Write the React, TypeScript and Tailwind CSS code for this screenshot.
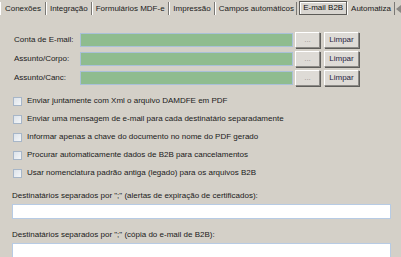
import React from "react";

// Abas do formulário
const abas = [
  { nome: "Conexões", w: "w-[46px]" },
  { nome: "Integração", w: "w-[46px]" },
  { nome: "Formulários MDF-e", w: "w-[77px]" },
  { nome: "Impressão", w: "w-[47px]" },
  { nome: "Campos automáticos", w: "w-[82px]" },
];

const campos = ["Conta de E-mail:", "Assunto/Corpo:", "Assunto/Canc:"];

const opcoes = [
  "Enviar juntamente com Xml o arquivo DAMDFE em PDF",
  "Enviar uma mensagem de e-mail para cada destinatário separadamente",
  "Informar apenas a chave do documento no nome do PDF gerado",
  "Procurar automaticamente dados de B2B para cancelamentos",
  "Usar nomenclatura padrão antiga (legado) para os arquivos B2B",
];

function Botao({ children, w, cor }: { children: React.ReactNode; w: string; cor: string }) {
  return (
    <div
      className={`${w} h-[16px] flex items-center justify-center border border-t-white border-l-white border-b-[#8c8a86] border-r-[#8c8a86] bg-[#dedbd6] shadow-[1px_1px_0_#5f5e5b] ${cor}`}
    >
      {children}
    </div>
  );
}

export default function App() {
  return (
    <div
      className="w-[401px] h-[257px] overflow-hidden bg-[#d4d0c8] text-[8px] leading-none text-black"
      style={{ fontFamily: '"Liberation Sans", Arial, sans-serif' }}
    >
      {/* barra de abas */}
      <div className="h-[18px] flex items-start pt-[2px]">
        {abas.map((a) => (
          <div
            key={a.nome}
            className={`${a.w} h-[13px] flex items-center justify-center border-l border-l-white border-r border-r-[#7a7874] text-[#1a1a1a]`}
          >
            {a.nome}
          </div>
        ))}
        <div className="w-[2px]" />
        <div className="w-[48px] h-[14px] -mt-[1px] flex items-center justify-center border border-[#5c5b58] bg-[#d8d5d0] shadow-[inset_1px_1px_0_white] text-[#111]">
          E-mail B2B
        </div>
        <div className="w-[48px] h-[13px] flex items-center justify-center border-l border-l-white border-r border-r-[#7a7874] text-[#1a1a1a]">
          Automatiza
        </div>
        <div className="ml-[1px] mt-[3px] w-0 h-0 border-y-[4px] border-y-transparent border-r-[5px] border-r-[#8a8884]" />
      </div>

      {/* campos de e-mail */}
      <div className="mt-[14px] flex flex-col gap-[3px] pl-[14px]">
        {campos.map((c) => (
          <div key={c} className="flex items-center h-[16px]">
            <div className="w-[66px] text-[#1a1a1a]">{c}</div>
            <div className="w-[213px] h-[14px] bg-[#8fbc8f] border border-[#a9c0d8]" />
            <div className="ml-[2px]">
              <Botao w="w-[25px]" cor="text-[#9a9894]">
                ...
              </Botao>
            </div>
            <div className="ml-[4px]">
              <Botao w="w-[35px]" cor="text-[#2a1f44]">
                Limpar
              </Botao>
            </div>
          </div>
        ))}
      </div>

      {/* opções */}
      <div className="mt-[6px] flex flex-col pl-[13px]">
        {opcoes.map((o) => (
          <div key={o} className="h-[18px] flex items-center">
            <div className="w-[9px] h-[9px] border border-[#a7b6c8] bg-gradient-to-br from-[#dde3ea] to-[#f4f6f8]" />
            <div className="ml-[5px] text-[#1a1a1a]">{o}</div>
          </div>
        ))}
      </div>

      {/* destinatários */}
      <div className="pl-[12px] pr-[10px]">
        <div className="mt-[9px] h-[10px] flex items-center text-[#1a1a1a]">
          Destinatários separados por ";" (alertas de expiração de certificados):
        </div>
        <div className="mt-[3px] w-[379px] h-[15px] bg-white border border-[#b7cbe4]" />
        <div className="mt-[11px] h-[10px] flex items-center text-[#1a1a1a]">
          Destinatários separados por ";" (cópia do e-mail de B2B):
        </div>
        <div className="mt-[3px] w-[379px] h-[15px] bg-white border border-[#b7cbe4]" />
      </div>
    </div>
  );
}
